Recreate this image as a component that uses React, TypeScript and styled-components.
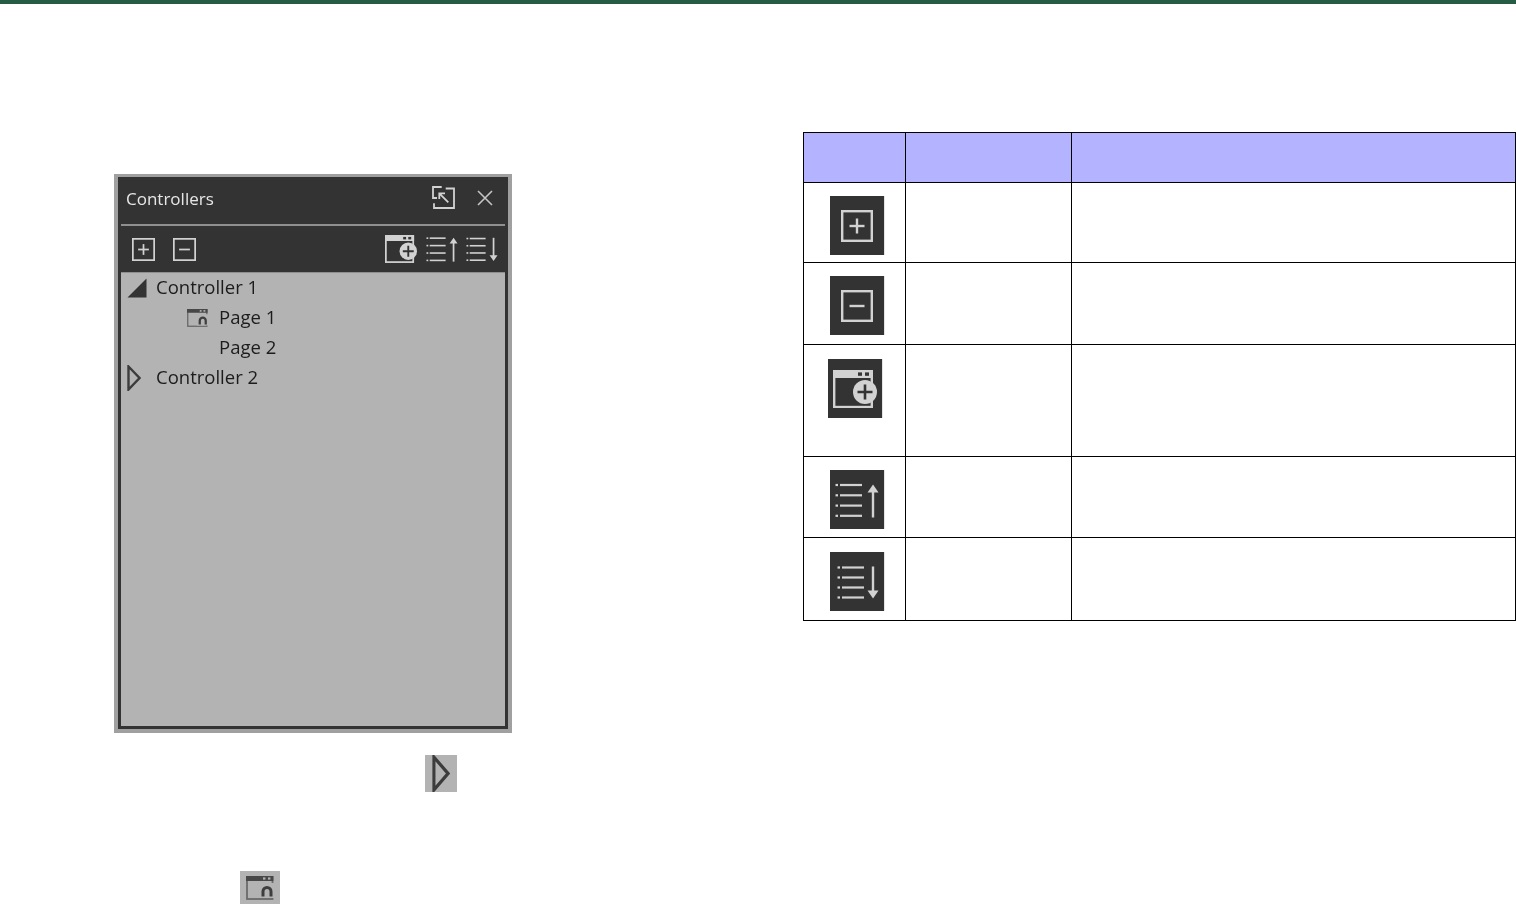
import React from "react";
import styled, { createGlobalStyle } from "styled-components";

const Global = createGlobalStyle`
  html, body { margin: 0; padding: 0; background: #fff; }
  body { font-family: "Open Sans", "Liberation Sans", sans-serif; }
`;

const Page = styled.div`
  width: 1516px;
  height: 904px;
  overflow: hidden;
  display: flex;
  flex-direction: column;
`;
const TopBar = styled.div`
  height: 4px;
  flex: none;
  background: #265c46;
`;
const Columns = styled.div`
  display: flex;
  align-items: flex-start;
`;
const LeftColumn = styled.div`
  width: 803px;
  flex: none;
  padding: 170px 0 0 114px;
  box-sizing: border-box;
`;
const RightColumn = styled.div`
  width: 713px;
  flex: none;
  padding-top: 128px;
`;

const Panel = styled.section`
  width: 398px;
  height: 559px;
  box-sizing: border-box;
  border: 4px solid #a0a0a0;
  border-top-width: 3px;
  display: flex;
  flex-direction: column;
  background: #333;
`;
const PanelInner = styled.div`
  flex: 1;
  display: flex;
  flex-direction: column;
  padding: 0 3px 3px;
  min-height: 0;
`;
const TitleBar = styled.header`
  height: 49px;
  flex: none;
  box-sizing: border-box;
  border-bottom: 2px solid #8f8f8f;
  display: flex;
  align-items: center;
  padding: 0 12px 5px 5px;
`;
const Title = styled.span`
  font-size: 17px;
  color: #e6e6e6;
  flex: 1;
  filter: blur(0.3px);
`;
const Toolbar = styled.div`
  height: 46px;
  flex: none;
  display: flex;
  align-items: center;
  padding: 0 7px 0 11px;
`;
const Spacer = styled.div`
  flex: 1;
`;
const Glyph = styled.svg<{ $gap?: number }>`
  display: block;
  flex: none;
  margin-left: ${(p) => p.$gap ?? 0}px;
  filter: blur(0.35px);
`;
const Tree = styled.div`
  flex: 1;
  background: #b3b3b3;
  border-top: 1px solid #8f8f8f;
`;
const TreeRow = styled.div<{ $indent: number }>`
  height: 30px;
  display: flex;
  align-items: center;
  padding-left: ${(p) => p.$indent}px;
  font-size: 18.5px;
  color: #1c1c1c;
`;
const TreeLabel = styled.span`
  margin-bottom: 4px;
  filter: blur(0.25px);
`;
const TreeSlot = styled.span<{ $w: number }>`
  width: ${(p) => p.$w}px;
  flex: none;
  display: flex;
  align-items: center;
`;

const ChipRow = styled.div<{ $left: number; $top: number }>`
  margin: ${(p) => p.$top}px 0 0 ${(p) => p.$left}px;
`;
const SmallChip = styled.div<{ $w: number; $h: number }>`
  width: ${(p) => p.$w}px;
  height: ${(p) => p.$h}px;
  background: #b3b3b3;
  display: flex;
  align-items: center;
  justify-content: center;
`;

const Table = styled.table`
  border-collapse: collapse;
  table-layout: fixed;
  width: 712px;
`;
const HeadCell = styled.th<{ $w: number }>`
  width: ${(p) => p.$w}px;
  height: 50px;
  padding: 0;
  box-sizing: border-box;
  background: #b3b3ff;
  border: 1px solid #000;
`;
const BodyRow = styled.tr<{ $h: number }>`
  height: ${(p) => p.$h}px;
`;
const Cell = styled.td`
  padding: 0;
  border: 1px solid #000;
`;
const IconCell = styled(Cell)<{ $top: number; $left: number }>`
  vertical-align: top;
  padding: ${(p) => p.$top}px 0 0 ${(p) => p.$left}px;
`;
const DarkChip = styled.div`
  width: 54px;
  height: 59px;
  background: #333;
  border-right: 1px solid #e4e4e4;
  display: flex;
  align-items: center;
  justify-content: center;
`;

const stroke = "#d2d2d2";

const PlusMinus = ({ size, plus, gap }: { size: number; plus?: boolean; gap?: number }) => (
  <Glyph $gap={gap} width={size} height={size} viewBox="0 0 32 32" fill="none" stroke={stroke}>
    <rect x="1.2" y="1.2" width="29.6" height="29.6" strokeWidth="2.4" />
    {plus && <path d="M16 8.5V23.5" strokeWidth="2.4" />}
    <path d="M8.5 16H23.5" strokeWidth="2.4" />
  </Glyph>
);

const AddPage = ({ w, h }: { w: number; h: number }) => (
  <Glyph width={w} height={h} viewBox="0 0 44 38">
    <rect x="1.2" y="1" width="37.6" height="36" fill="none" stroke={stroke} strokeWidth="2.4" />
    <rect x="0" y="0" width="40" height="8" fill={stroke} />
    <rect x="25" y="2.4" width="4" height="3.4" fill="#333" />
    <rect x="32" y="2.4" width="4" height="3.4" fill="#333" />
    <circle cx="32" cy="22" r="12" fill={stroke} />
    <path d="M32 14.5V29.5M24.5 22H39.5" stroke="#333" strokeWidth="2.6" />
  </Glyph>
);

const SortList = ({ w, h, up, gap, offset = 0 }: { w: number; h: number; up?: boolean; gap?: number; offset?: number }) => {
  const ys = up ? [3, 13.3, 23.6, 33.8] : [3.5, 13.5, 23.5, 33.5];
  return (
    <Glyph $gap={gap} width={w} height={h} viewBox="0 0 44 36" fill="none" stroke={stroke}>
      {ys.map((y) => (
        <g key={y} strokeWidth="2.2">
          <path d={`M${0.5 + offset} ${y}H${3 + offset}`} />
          <path d={`M${5 + offset} ${y}H${27 + offset}`} />
        </g>
      ))}
      {up ? (
        <>
          <path d="M38 8V35.5" strokeWidth="2.4" />
          <path d="M32.5 10.5L38 2.5L43.5 10.5Z" fill={stroke} stroke="none" />
        </>
      ) : (
        <>
          <path d="M38 2.5V28" strokeWidth="2.4" />
          <path d="M32.5 26.5L38 34.5L43.5 26.5Z" fill={stroke} stroke="none" />
        </>
      )}
    </Glyph>
  );
};

const TriangleOpen = () => (
  <Glyph width="20" height="20" viewBox="0 0 20 20">
    <path d="M19.5 0.5V19.5H0.5Z" fill="#333" />
  </Glyph>
);
const TriangleClosed = ({ w, h }: { w: number; h: number }) => (
  <Glyph width={w} height={h} viewBox="0 0 14 26" fill="none" stroke="#3c3c3c" preserveAspectRatio="none">
    <path d="M1.5 1.5L12.5 13L1.5 24.5Z" strokeWidth="2.4" />
  </Glyph>
);
const HomePage = ({ w, h }: { w: number; h: number }) => (
  <Glyph width={w} height={h} viewBox="0 0 28 24">
    <rect x="1" y="1" width="25.5" height="22" fill="none" stroke="#6a6a6a" strokeWidth="1.8" />
    <rect x="0" y="0" width="27.4" height="5" fill="#484848" />
    <rect x="17" y="1.4" width="2.4" height="2.2" fill="#b3b3b3" />
    <rect x="22" y="1.4" width="2.4" height="2.2" fill="#b3b3b3" />
    <rect x="13" y="7" width="15" height="15" fill="#b3b3b3" />
    <path d="M17 20.5V15.5a4 4 0 0 1 8 0V20.5" fill="none" stroke="#3e3e3e" strokeWidth="3" />
  </Glyph>
);

const rows = [
  { h: 80, top: 13, left: 26, icon: <PlusMinus size={32} plus /> },
  { h: 82, top: 13, left: 26, icon: <PlusMinus size={32} /> },
  { h: 112, top: 14, left: 24, icon: <AddPage w={44} h={38} /> },
  { h: 81, top: 13, left: 26, icon: <SortList w={44} h={36} up /> },
  { h: 83, top: 14, left: 26, icon: <SortList w={44} h={36} offset={2} /> },
];

export default function App() {
  return (
    <Page>
      <Global />
      <TopBar />
      <Columns>
        <LeftColumn>
          <Panel>
            <PanelInner>
              <TitleBar>
                <Title>Controllers</Title>
                <Glyph width="24" height="24" viewBox="0 0 24 24" fill="none" stroke={stroke} strokeWidth="1.8">
                  <path d="M9.7 1H1V12H5" />
                  <path d="M13.7 2.5H22V22H2V17.3" />
                  <path d="M16.3 16.3L7.3 7.3M7.3 13V7.3H13" />
                </Glyph>
                <Glyph $gap={21} width="16" height="16" viewBox="0 0 16 16" fill="none" stroke="#c4c4c4" strokeWidth="1.6">
                  <path d="M1 1L15 15M15 1L1 15" />
                </Glyph>
              </TitleBar>
              <Toolbar>
                <PlusMinus size={23} plus />
                <PlusMinus size={23} gap={18} />
                <Spacer />
                <AddPage w={32} h={28} />
                <SortList w={32} h={26} up gap={9} />
                <SortList w={32} h={26} gap={8} />
              </Toolbar>
              <Tree>
                <TreeRow $indent={6}>
                  <TreeSlot $w={29}><TriangleOpen /></TreeSlot>
                  <TreeLabel>Controller 1</TreeLabel>
                </TreeRow>
                <TreeRow $indent={66}>
                  <TreeSlot $w={32}><HomePage w={21} h={18} /></TreeSlot>
                  <TreeLabel>Page 1</TreeLabel>
                </TreeRow>
                <TreeRow $indent={98}>
                  <TreeLabel>Page 2</TreeLabel>
                </TreeRow>
                <TreeRow $indent={6}>
                  <TreeSlot $w={29}><TriangleClosed w={14} h={26} /></TreeSlot>
                  <TreeLabel>Controller 2</TreeLabel>
                </TreeRow>
              </Tree>
            </PanelInner>
          </Panel>
          <ChipRow $left={311} $top={22}>
            <SmallChip $w={32} $h={37}><TriangleClosed w={18} h={37} /></SmallChip>
          </ChipRow>
          <ChipRow $left={126} $top={79}>
            <SmallChip $w={40} $h={33}><HomePage w={28} h={24} /></SmallChip>
          </ChipRow>
        </LeftColumn>
        <RightColumn>
          <Table>
            <thead>
              <tr>
                <HeadCell $w={102} />
                <HeadCell $w={166} />
                <HeadCell $w={444} />
              </tr>
            </thead>
            <tbody>
              {rows.map((r, i) => (
                <BodyRow key={i} $h={r.h}>
                  <IconCell $top={r.top} $left={r.left}>
                    <DarkChip>{r.icon}</DarkChip>
                  </IconCell>
                  <Cell />
                  <Cell />
                </BodyRow>
              ))}
            </tbody>
          </Table>
        </RightColumn>
      </Columns>
    </Page>
  );
}
